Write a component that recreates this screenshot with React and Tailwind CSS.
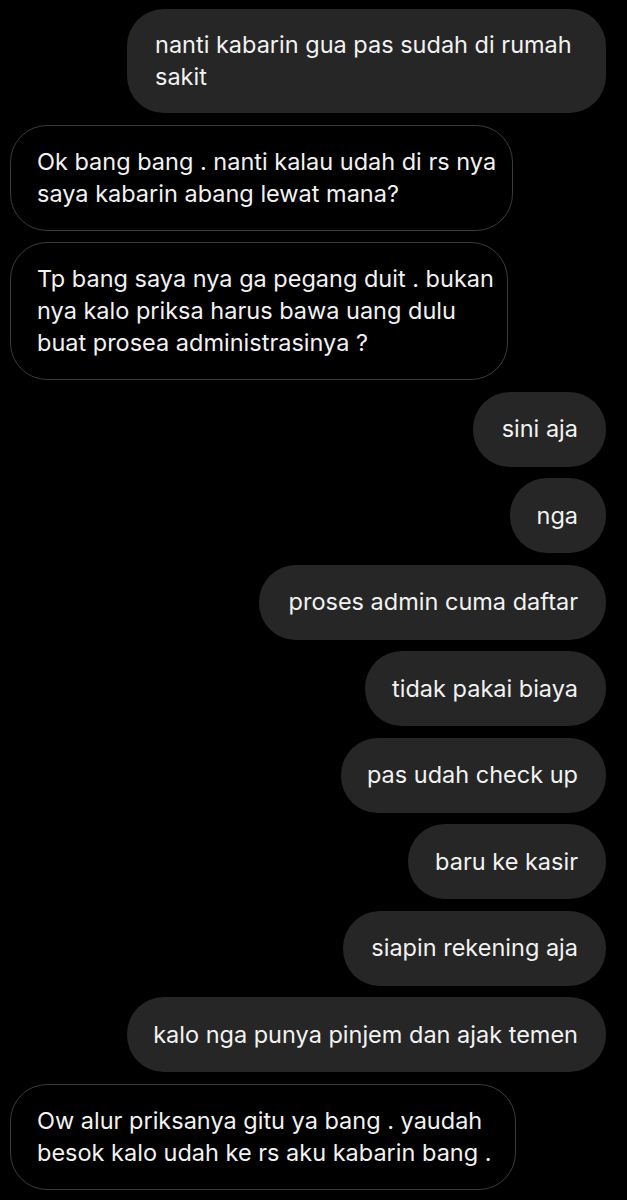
const messages = [
  { id: 1, me: true, w: "w-[479px]", lines: ["nanti kabarin gua pas sudah di rumah", "sakit"] },
  { id: 2, me: false, w: "w-[503px]", lines: ["Ok bang bang . nanti kalau udah di rs nya", "saya kabarin abang lewat mana?"] },
  { id: 3, me: false, w: "w-[498px]", lines: ["Tp bang saya nya ga pegang duit . bukan", "nya kalo priksa harus bawa uang dulu", "buat prosea administrasinya ?"] },
  { id: 4, me: true, w: "w-[133px]", lines: ["sini aja"] },
  { id: 5, me: true, w: "w-[96px]", lines: ["nga"] },
  { id: 6, me: true, w: "w-[347px]", lines: ["proses admin cuma daftar"] },
  { id: 7, me: true, w: "w-[241px]", lines: ["tidak pakai biaya"] },
  { id: 8, me: true, w: "w-[265px]", lines: ["pas udah check up"] },
  { id: 9, me: true, w: "w-[198px]", lines: ["baru ke kasir"] },
  { id: 10, me: true, w: "w-[263px]", lines: ["siapin rekening aja"] },
  { id: 11, me: true, w: "w-[479px]", lines: ["kalo nga punya pinjem dan ajak temen"] },
  { id: 12, me: false, w: "w-[506px]", lines: ["Ow alur priksanya gitu ya bang . yaudah", "besok kalo udah ke rs aku kabarin bang ."] },
  // next bubble only peeks in at the bottom edge
  { id: 13, me: false, w: "w-[500px]", lines: [] },
];

function Bubble({ msg }) {
  const base =
    "flex flex-col justify-center min-h-[75px] py-[20px] rounded-[37px] text-[23.5px] leading-[32px] text-[#f2f2f2] whitespace-nowrap";
  return (
    <div className={msg.me ? "flex justify-end pr-[21px]" : "flex justify-start pl-[10px]"}>
      <div
        className={
          msg.me
            ? `${base} ${msg.w} px-[28px] bg-[#262626] items-end`
            : `${base} ${msg.w} px-[26px] bg-black border border-[#3a3a3a] items-start`
        }
      >
        {msg.lines.map((line, i) => (
          <span key={i} className={msg.me && msg.lines.length > 1 ? "self-start" : ""}>
            {line}
          </span>
        ))}
      </div>
    </div>
  );
}

export default function App() {
  return (
    <div
      className="h-[1200px] overflow-hidden bg-black pt-[9px]"
      style={{ fontFamily: "Inter, 'Noto Sans', sans-serif" }}
    >
      <div className="flex flex-col gap-[11.5px]">
        {messages.map((m) => (
          <Bubble key={m.id} msg={m} />
        ))}
      </div>
    </div>
  );
}
